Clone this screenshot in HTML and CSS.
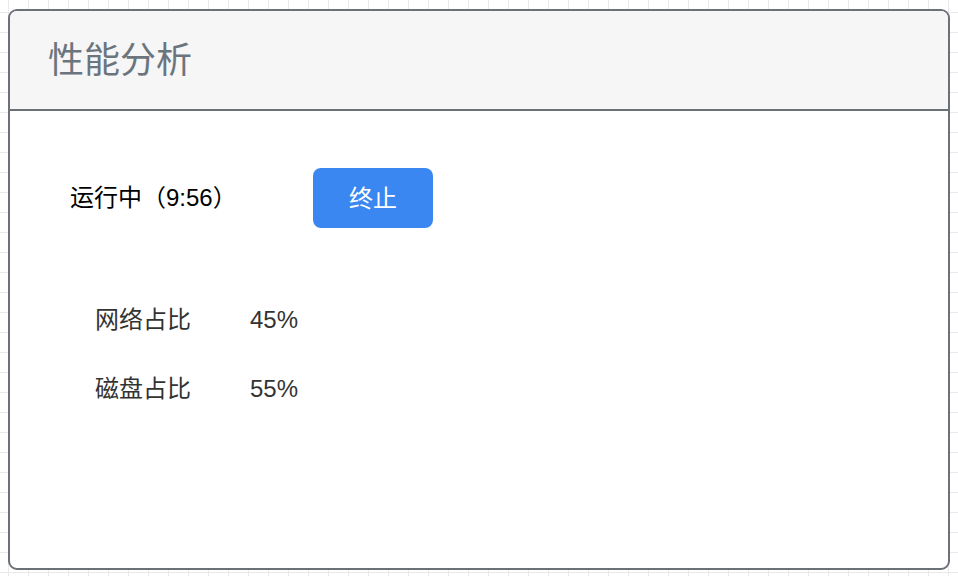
FILE: index.html
```html
<!DOCTYPE html>
<html lang="zh">
<head>
<meta charset="utf-8">
<link rel="stylesheet" href="styles.css">
</head>
<body>
<div class="card">
  <div class="card-header">
    <h1 class="title">性能分析</h1>
  </div>
  <div class="card-body">
    <div class="status-row">
      <span class="status">运行中（9:56）</span>
      <button class="btn-stop">终止</button>
    </div>
    <div class="stats">
      <div class="stat"><span class="stat-label">网络占比</span><span class="stat-value">45%</span></div>
      <div class="stat"><span class="stat-label">磁盘占比</span><span class="stat-value">55%</span></div>
    </div>
  </div>
</div>
</body>
</html>
```
FILE: styles.css
```css
html, body {
  height: 100%;
}
body {
  margin: 0;
  padding: 9px 8px 6px 8px;
  box-sizing: border-box;
  display: flex;
  flex-direction: column;
  font-family: "Liberation Sans", "Noto Sans CJK SC", sans-serif;
  background-color: #ffffff;
  background-image:
    linear-gradient(to right, #e9e9e9 1px, transparent 1px),
    linear-gradient(to bottom, #e9e9e9 1px, transparent 1px);
  background-size: 20px 20px;
  background-position: 8px 12px;
}
.card {
  flex: 1;
  display: flex;
  flex-direction: column;
  border: 2px solid #6c7178;
  border-radius: 9px;
  background: #ffffff;
  overflow: hidden;
}
.card-header {
  height: 98px;
  display: flex;
  align-items: center;
  padding: 0 38px;
  background: #f6f6f6;
  border-bottom: 2px solid #6c7178;
}
.title {
  margin: 0;
  font-size: 36px;
  font-weight: 400;
  color: #6c757d;
  line-height: 1;
  padding-top: 2px;
}
.card-body {
  padding: 57px 0 0 60px;
}
.status-row {
  display: flex;
  align-items: center;
}
.status {
  width: 243px;
  font-size: 24px;
  line-height: 1;
  color: #000000;
}
.btn-stop {
  width: 120px;
  height: 60px;
  border: none;
  border-radius: 8px;
  background: #3b87f2;
  color: #ffffff;
  font-family: inherit;
  font-size: 24px;
  line-height: 1;
  padding: 1px 0 0 0;
}
.stats {
  margin-top: 75px;
  padding-left: 25px;
  display: flex;
  flex-direction: column;
  gap: 35px;
}
.stat {
  display: flex;
  align-items: center;
  height: 34px;
  font-size: 24px;
  line-height: 1;
  color: #333333;
  padding-bottom: 1px;
  box-sizing: border-box;
}
.stat-label {
  width: 155px;
}
```
